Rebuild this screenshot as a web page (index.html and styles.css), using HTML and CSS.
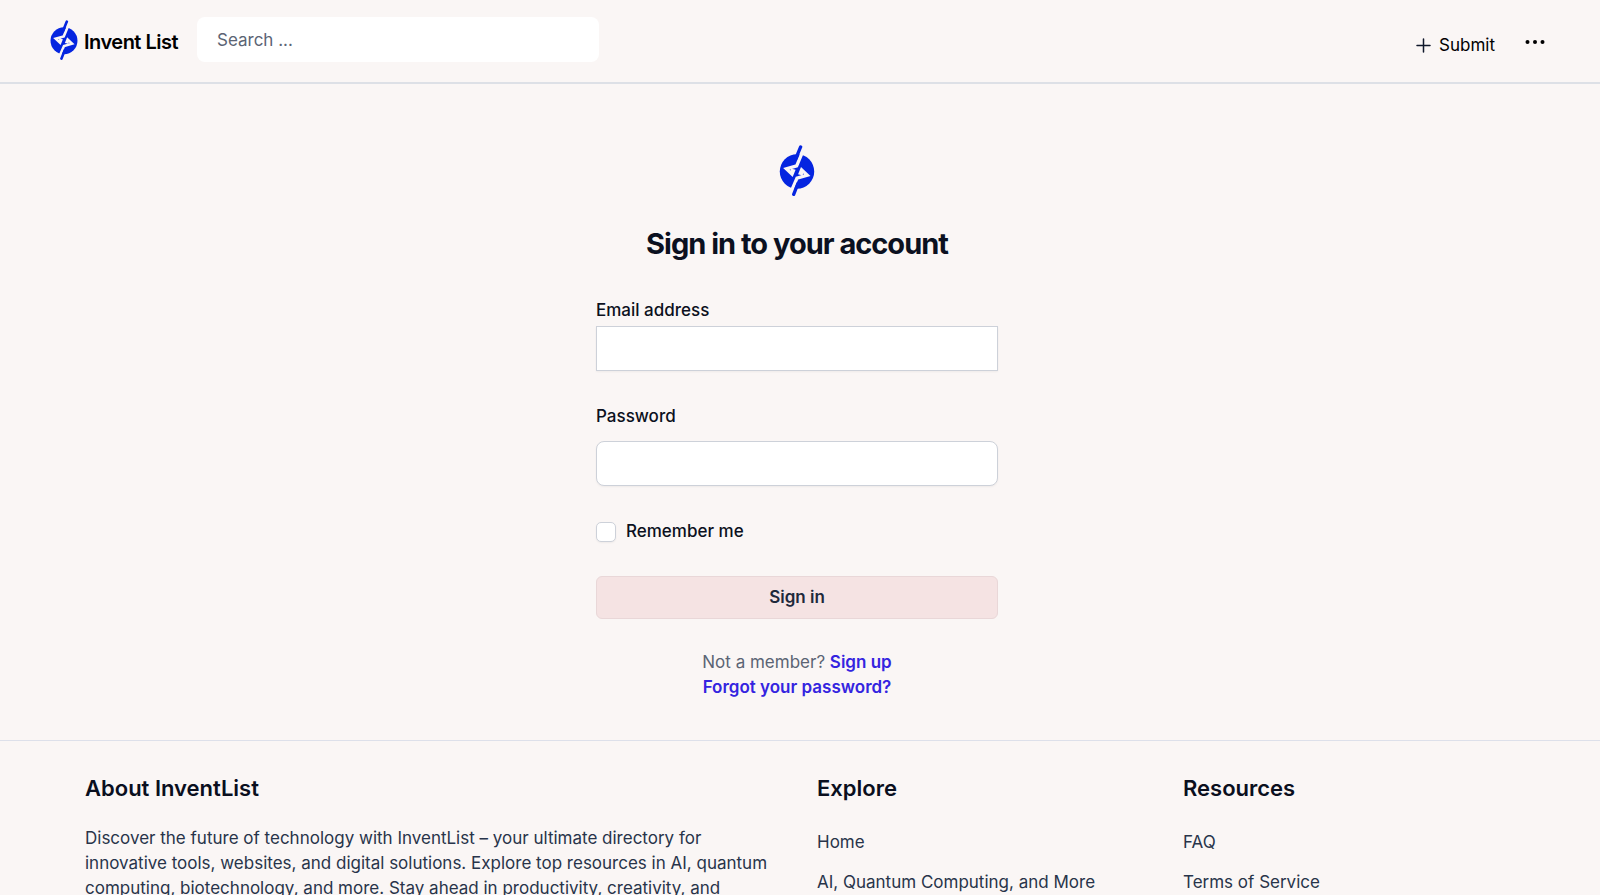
FILE: index.html
```html
<!DOCTYPE html>
<html lang="en">
<head>
<meta charset="utf-8">
<title>Invent List</title>
<link rel="stylesheet" href="styles.css">
</head>
<body>
<svg class="sprite" aria-hidden="true">
  <symbol id="logo" viewBox="0 0 108 154">
    <circle cx="54" cy="80" r="52" fill="#0525e0"/>
    <path d="M71 20 53 63 22 72 39 88 43 78 35 76M36 142 54 100 85 91 68 75 64 85 72 87" fill="none" stroke="#faf6f5" stroke-width="10"/>
    <path d="M65 6 50 42M44 149 57 116" stroke="#0525e0" stroke-width="10" stroke-linecap="round"/>
  </symbol>
</svg>
<header class="topbar">
  <a class="brand" href="#"><svg class="brand-mark" aria-hidden="true"><use href="#logo"/></svg><span>Invent List</span></a>
  <input class="search" type="search" placeholder="Search ..." aria-label="Search">
  <nav class="actions">
    <a class="submit" href="#"><svg width="15" height="15" viewBox="0 0 15 15" aria-hidden="true"><path d="M7.5 1v13M1 7.5h13" stroke="#0f172a" stroke-width="1.5" stroke-linecap="round"/></svg>Submit</a>
    <button class="more" type="button" aria-label="More"><svg width="20" height="6" viewBox="0 0 20 6" aria-hidden="true"><circle cx="2.5" cy="3" r="2"/><circle cx="10" cy="3" r="2"/><circle cx="17.5" cy="3" r="2"/></svg></button>
  </nav>
</header>
<main class="signin">
  <svg class="signin-mark" aria-hidden="true"><use href="#logo"/></svg>
  <h1>Sign in to your account</h1>
  <form class="form">
    <label for="email">Email address</label>
    <input class="field square" id="email" type="email">
    <label class="spaced" for="password">Password</label>
    <input class="field" id="password" type="password">
    <div class="remember"><input id="remember" type="checkbox"><label for="remember">Remember me</label></div>
    <button class="primary" type="submit">Sign in</button>
  </form>
  <p class="help">Not a member? <a href="#">Sign up</a><br><a href="#">Forgot your password?</a></p>
</main>
<footer class="footer">
  <section class="about">
    <h2>About InventList</h2>
    <p>Discover the future of technology with InventList – your ultimate directory for innovative tools, websites, and digital solutions. Explore top resources in AI, quantum computing, biotechnology, and more. Stay ahead in productivity, creativity, and</p>
  </section>
  <section>
    <h2>Explore</h2>
    <ul><li><a href="#">Home</a></li><li><a href="#">AI, Quantum Computing, and More</a></li></ul>
  </section>
  <section>
    <h2>Resources</h2>
    <ul><li><a href="#">FAQ</a></li><li><a href="#">Terms of Service</a></li></ul>
  </section>
</footer>
</body>
</html>
```
FILE: styles.css
```css
* { box-sizing: border-box; }
html { scrollbar-width: none; }
body {
  margin: 0;
  background: #faf6f5;
  color: #0b1020;
  font: 17px/25px Inter, "Liberation Sans", sans-serif;
}
h1, h2, p, ul { margin: 0; padding: 0; }
ul { list-style: none; }
a { color: inherit; text-decoration: none; }
button, input { font: inherit; color: inherit; }
.sprite { position: absolute; width: 0; height: 0; }

.topbar {
  display: flex;
  align-items: flex-start;
  padding: 17px 55px 20px 50px;
  border-bottom: 2px solid #dde0e6;
}
.brand {
  display: flex;
  align-items: center;
  gap: 6px;
  width: 147px;
  padding-top: 3px;
  color: #000;
  font-size: 20px;
  font-weight: 600;
  letter-spacing: -0.025em;
  white-space: nowrap;
}
.brand span { padding-top: 4px; }
.brand-mark { width: 28px; height: 40px; flex: none; }
.search {
  width: 402px;
  height: 45px;
  padding: 0 20px;
  border: 0;
  border-radius: 8px;
  background: #fff;
}
.search::placeholder { color: #5b6474; opacity: 1; }
.actions {
  display: flex;
  gap: 30px;
  margin-left: auto;
  padding-top: 16px;
}
.submit { display: flex; align-items: center; gap: 8px; color: #000; }
.more { align-self: flex-start; display: flex; margin-top: 6px; padding: 0; border: 0; background: none; }

.signin {
  display: flex;
  flex-direction: column;
  align-items: center;
  padding: 61px 6px 40px 0;
}
.signin-mark { width: 36px; height: 51px; }
h1 { margin-top: 28px; font-size: 29px; line-height: 40px; font-weight: 700; letter-spacing: -1px; }
.form { display: flex; flex-direction: column; width: 402px; margin-top: 34px; font-weight: 500; }
.field {
  height: 45px;
  margin-top: 12px;
  padding: 0 12px;
  border: 1px solid #cdd1d9;
  border-radius: 8px;
  background: #fff;
  box-shadow: 0 1px 2px #0000000d;
}
.square { margin-top: 3px; border-radius: 0; }
.spaced { margin-top: 33px; }
.remember { display: flex; align-items: center; gap: 10px; margin-top: 33px; }
.remember input {
  appearance: none;
  width: 20px;
  height: 20px;
  margin: 0;
  border: 1px solid #cdd1d9;
  border-radius: 5px;
  background: #fff;
  box-shadow: 0 1px 2px #0000000d;
}
.primary {
  height: 43px;
  margin-top: 32px;
  border: 1px solid #e9d7d8;
  border-radius: 6px;
  background: #f5e3e3;
  color: #1e293b;
  font-weight: 600;
}
.help { margin-top: 31px; color: #5b6474; text-align: center; }
.help a { color: #3424e0; font-weight: 600; }

.footer {
  display: grid;
  grid-template-columns: repeat(4, 1fr);
  column-gap: 40px;
  padding: 33px 91px 40px 85px;
  border-top: 1px solid #dde0ea;
  color: #28344a;
}
.about { grid-column: span 2; }
h2 { margin-bottom: 24px; color: #0a0f1e; font-size: 22px; line-height: 28px; font-weight: 600; }
.footer ul { display: grid; gap: 15px; padding-top: 4px; }
```
